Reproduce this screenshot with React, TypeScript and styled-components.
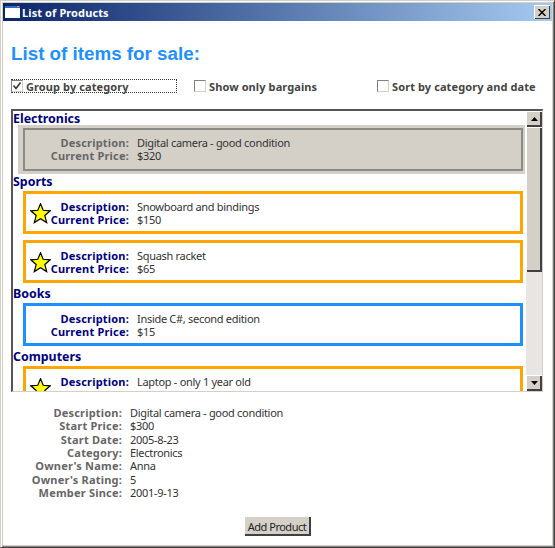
import React from "react";
import styled, { createGlobalStyle } from "styled-components";

const GlobalStyle = createGlobalStyle`
  html, body {
    margin: 0;
    padding: 0;
    background: #ffffff;
  }
  body {
    font-family: "Noto Sans", "Liberation Sans", Arial, sans-serif;
    font-size: 11px;
    color: #222222;
  }
`;

const Frame = styled.div`
  box-sizing: border-box;
  width: 555px;
  height: 548px;
  display: flex;
  flex-direction: column;
  background: #ffffff;
  padding: 2px;
  border: 1px solid #404040;
  border-top-color: #d4d0c8;
  border-left-color: #d4d0c8;
  box-shadow: inset 1px 1px 0 #ffffff, inset -1px -1px 0 #808080, inset 2px 2px 0 #d4d0c8, inset -2px -2px 0 #d4d0c8;
`;

const TitleBar = styled.div`
  height: 18px;
  flex: none;
  display: flex;
  align-items: center;
  padding: 0 2px;
  background: linear-gradient(to right, #0a246a, #a6caf0);
`;

const TitleText = styled.span`
  flex: 1;
  margin-left: 2px;
  color: #ffffff;
  font-weight: bold;
  font-size: 11px;
  letter-spacing: 0.1px;
`;

const CloseButton = styled.div`
  width: 16px;
  height: 14px;
  display: flex;
  align-items: center;
  justify-content: center;
  background: #d4d0c8;
  box-shadow: inset 1px 1px 0 #ffffff, inset -1px -1px 0 #404040;
`;

const Content = styled.div`
  flex: 1;
  display: flex;
  flex-direction: column;
  padding: 0 9px 0 8px;
`;

const Heading = styled.h1`
  margin: 21px 0 0;
  font-size: 18.8px;
  line-height: 24px;
  font-weight: bold;
  font-family: "Liberation Sans", Arial, sans-serif;
  color: #1e90ff;
`;

const Options = styled.div`
  display: grid;
  grid-template-columns: repeat(3, 1fr);
  column-gap: 17px;
  margin-top: 13px;
  height: 14px;
`;

const Option = styled.label<{ $focused?: boolean }>`
  display: flex;
  align-items: center;
  gap: 3px;
  box-sizing: border-box;
  height: 14px;
  font-weight: bold;
  font-size: 11px;
  letter-spacing: 0.1px;
  color: #444444;
  white-space: nowrap;
  border: 1px dotted ${(p) => (p.$focused ? "#333333" : "transparent")};
  border-left: none;
`;

const Box = styled.span`
  box-sizing: border-box;
  width: 12px;
  height: 12px;
  flex: none;
  display: flex;
  align-items: center;
  justify-content: center;
  background: #ffffff;
  border: 1px solid #808080;
  border-right-color: #d4d0c8;
  border-bottom-color: #d4d0c8;
`;

const ListBox = styled.div`
  box-sizing: border-box;
  margin-top: 16px;
  height: 283px;
  display: flex;
  overflow: hidden;
  border: 2px solid #555555;
  border-right: 1px solid #d4d0c8;
  border-bottom: 1px solid #d4d0c8;
`;

const ListBody = styled.div`
  flex: 1;
  min-width: 0;
  overflow: hidden;
`;

const GroupTitle = styled.div`
  box-sizing: border-box;
  height: 14px;
  padding-top: 1px;
  line-height: 14px;
  font-size: 12.4px;
  font-weight: bold;
  color: #000080;
`;

const ItemRow = styled.div<{ $selected?: boolean }>`
  padding: 3px 2px 3px 5px;
  margin: 0 1px 0 5px;
  background: ${(p) => (p.$selected ? "#d4d0c8" : "transparent")};
`;

const Card = styled.div<{ $tone: "orange" | "blue" | "gray" }>`
  box-sizing: border-box;
  position: relative;
  height: 43px;
  padding: 6px 0 0;
  border: 3px solid
    ${(p) => (p.$tone === "orange" ? "#ffa500" : p.$tone === "blue" ? "#1e90ff" : "#8c8a84")};
  ${(p) => p.$tone === "gray" && "border-width: 2px; padding: 6px 0 0 1px;"}
`;

const FieldGrid = styled.div<{ $label: number; $line: number; $muted?: boolean }>`
  display: grid;
  grid-template-columns: ${(p) => p.$label}px 1fr;
  column-gap: 8px;
  line-height: ${(p) => p.$line}px;
  font-size: 11px;
  & > b {
    text-align: right;
    letter-spacing: 0.2px;
    white-space: nowrap;
    color: ${(p) => (p.$muted ? "#666666" : "#000080")};
  }
  & > span {
    color: #333333;
    letter-spacing: -0.3px;
    white-space: nowrap;
  }
`;

const StarSlot = styled.div`
  position: absolute;
  left: 4px;
  top: 9px;
  width: 21px;
  height: 21px;
`;

const Scrollbar = styled.div`
  width: 16px;
  flex: none;
  display: flex;
  flex-direction: column;
  background: #e8e6e2;
`;

const ScrollButton = styled.div`
  width: 16px;
  height: 16px;
  flex: none;
  display: flex;
  align-items: center;
  justify-content: center;
  background: #d4d0c8;
  box-shadow: inset 1px 1px 0 #ffffff, inset -2px -2px 0 #404040;
`;

const Thumb = styled.div`
  height: 145px;
  background: #d4d0c8;
  box-shadow: inset 1px 1px 0 #ffffff, inset -2px -2px 0 #404040;
`;

const Track = styled.div`
  flex: 1;
`;

const Details = styled.div`
  margin-top: 14px;
`;

const Footer = styled.div`
  display: flex;
  justify-content: center;
  margin-top: 17px;
`;

const AddButton = styled.button`
  width: 67px;
  height: 20px;
  padding: 0;
  border: none;
  font-family: inherit;
  font-size: 11px;
  letter-spacing: -0.5px;
  color: #222222;
  background: #d4d0c8;
  box-shadow: inset 1px 1px 0 #ffffff, inset -2px -2px 0 #404040;
`;

const Star = () => (
  <svg width="21" height="21" viewBox="0 0 21 21">
    <path
      d="M10.5 0.8 L13.2 7.3 L20.2 7.8 L14.8 12.5 L16.7 19.6 L10.5 15.8 L4.3 19.6 L6.2 12.5 L0.8 7.8 L7.8 7.3 Z"
      fill="#ffff00"
      stroke="#000000"
      strokeWidth="1.2"
    />
  </svg>
);

const Arrow = ({ up }: { up?: boolean }) => (
  <svg width="7" height="4" viewBox="0 0 7 4">
    <path d={up ? "M3.5 0 L7 4 L0 4 Z" : "M0 0 L7 0 L3.5 4 Z"} fill="#000000" />
  </svg>
);

type Product = { description: string; price: string; tone: "orange" | "blue" | "gray"; star?: boolean };

const groups: { title: string; items: Product[] }[] = [
  { title: "Electronics", items: [{ description: "Digital camera - good condition", price: "$320", tone: "gray" }] },
  {
    title: "Sports",
    items: [
      { description: "Snowboard and bindings", price: "$150", tone: "orange", star: true },
      { description: "Squash racket", price: "$65", tone: "orange", star: true },
    ],
  },
  { title: "Books", items: [{ description: "Inside C#, second edition", price: "$15", tone: "blue" }] },
  { title: "Computers", items: [{ description: "Laptop - only 1 year old", price: "$510", tone: "orange", star: true }] },
];

const details: [string, string][] = [
  ["Description:", "Digital camera - good condition"],
  ["Start Price:", "$300"],
  ["Start Date:", "2005-8-23"],
  ["Category:", "Electronics"],
  ["Owner's Name:", "Anna"],
  ["Owner's Rating:", "5"],
  ["Member Since:", "2001-9-13"],
];

const App: React.FC = () => {
  return (
    <Frame>
      <GlobalStyle />
      <TitleBar>
        <svg width="15" height="12" viewBox="0 0 15 12">
          <rect width="15" height="12" fill="#ffffff" />
          <rect width="15" height="2" fill="#316ac5" />
          <rect x="12" y="0" width="2" height="1" fill="#ff8040" />
        </svg>
        <TitleText>List of Products</TitleText>
        <CloseButton>
          <svg width="8" height="7" viewBox="0 0 8 7">
            <path d="M0.5 0 L7.5 7 M7.5 0 L0.5 7" stroke="#000000" strokeWidth="1.4" />
          </svg>
        </CloseButton>
      </TitleBar>
      <Content>
        <Heading>List of items for sale:</Heading>
        <Options>
          <Option $focused>
            <Box>
              <svg width="10" height="10" viewBox="0 0 10 10">
                <path d="M1.5 4.5 L4 7.5 L8.5 1.5" fill="none" stroke="#333333" strokeWidth="1.5" />
              </svg>
            </Box>
            Group by category
          </Option>
          <Option>
            <Box />
            Show only bargains
          </Option>
          <Option>
            <Box />
            Sort by category and date
          </Option>
        </Options>
        <ListBox>
          <ListBody>
            {groups.map((group) => (
              <div key={group.title}>
                <GroupTitle>{group.title}</GroupTitle>
                {group.items.map((item) => (
                  <ItemRow key={item.description} $selected={item.tone === "gray"}>
                    <Card $tone={item.tone}>
                      {item.star && (
                        <StarSlot>
                          <Star />
                        </StarSlot>
                      )}
                      <FieldGrid $label={103} $line={13} $muted={item.tone === "gray"}>
                        <b>Description:</b>
                        <span>{item.description}</span>
                        <b>Current Price:</b>
                        <span>{item.price}</span>
                      </FieldGrid>
                    </Card>
                  </ItemRow>
                ))}
              </div>
            ))}
          </ListBody>
          <Scrollbar>
            <ScrollButton>
              <Arrow up />
            </ScrollButton>
            <Thumb />
            <Track />
            <ScrollButton>
              <Arrow />
            </ScrollButton>
          </Scrollbar>
        </ListBox>
        <Details>
          <FieldGrid $label={111} $line={13.33} $muted>
            {details.map(([label, value]) => (
              <React.Fragment key={label}>
                <b>{label}</b>
                <span>{value}</span>
              </React.Fragment>
            ))}
          </FieldGrid>
        </Details>
        <Footer>
          <AddButton>Add Product</AddButton>
        </Footer>
      </Content>
    </Frame>
  );
};

export default App;
